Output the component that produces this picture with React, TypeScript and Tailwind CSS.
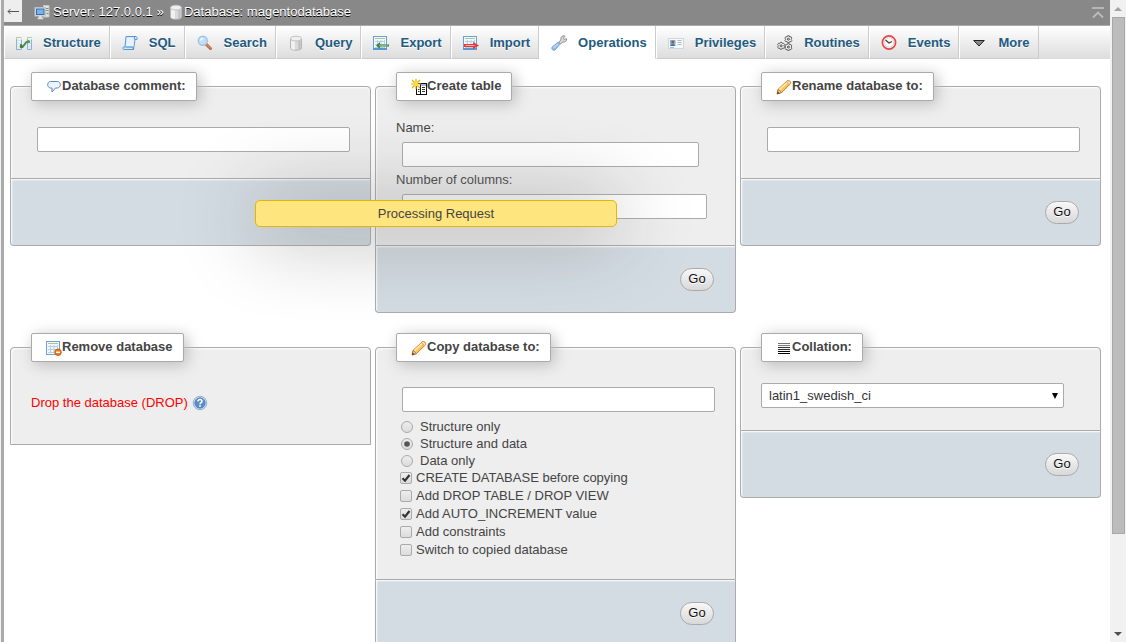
import React from "react";

type IconProps = { children: React.ReactNode };

function Icon({ children }: IconProps) {
  return (
    <svg width="16" height="16" viewBox="0 0 16 16" className="block shrink-0" aria-hidden="true">
      {children}
    </svg>
  );
}

const StructureIcon = () => (
  <Icon>
    <path d="M0 2.500h5.500M11 2.500h5" stroke="#b4cf9a" />
    <path d="M1 5.500h4M1 8.500h4M1 11.500h4M11.500 5.500h4M11.500 8.500h4M11.500 11.500h4" stroke="#d3e5f4" />
    <path d="M.5 3.500v11M5.500 4.500v10M.5 14.500h5M11.500 3.500v11M15.500 4.500v10M11.500 14.500h4" fill="none" stroke="#86b4dc" />
    <path d="M5 9v3h1.500L10.500 7H14" fill="none" stroke="#4f8a4b" strokeWidth="2" />
    <circle cx="5.500" cy="11.500" r="1.600" fill="#3f7f3e" />
    <circle cx="12.500" cy="6.500" r="1.500" fill="#5f9a52" />
  </Icon>
);

const SqlIcon = () => (
  <Icon>
    <path d="M4 1.500h9.500c1.500 0 2 1.500 1.500 3h-2L11.500 14.500H2c-1.200 0-1.500-1.500-.5-2.500h1.500z" fill="#d2e7fb" stroke="#5b97d3" />
    <path d="M5 2.500h7.500L11.200 12H3.800z" fill="#e6f2fd" />
    <path d="M12.500 4.500c-.3-1.500 0-3 1-3M3.500 12h7c.8 0 1 2 .3 2.500" fill="none" stroke="#3f7fc4" />
  </Icon>
);

const SearchIcon = () => (
  <Icon>
    <path d="M9 9.200l4.500 4.300" stroke="#b76a3c" strokeWidth="3" strokeLinecap="round" />
    <path d="M10 9.800l3.500 3.200" stroke="#e3a172" strokeLinecap="round" />
    <circle cx="5.800" cy="5.800" r="4.500" fill="#c3def8" stroke="#a2c4ea" strokeWidth="1.400" />
    <path d="M3.500 5.500c.3-1.300 1.200-2 2.500-2" stroke="#fff" fill="none" strokeWidth="1.300" />
  </Icon>
);

const DatabaseIcon = () => (
  <Icon>
    <path d="M2.500 3.500v9.500c0 3 11 3 11 0V3.500" fill="#d9d9d9" stroke="#b5b5b5" />
    <path d="M3 4v9c0 1 1.500 1.600 4 1.800V6z" fill="#f1f1f1" />
    <path d="M11.500 6v8.300" stroke="#bdbdbd" strokeWidth="2" />
    <ellipse cx="8" cy="3.600" rx="5.500" ry="2.400" fill="#efefef" stroke="#c2c2c2" />
  </Icon>
);

const SheetBase = () => (
  <>
    <rect x=".5" y="1.500" width="13" height="13" fill="#f2f8fd" stroke="#6f9fd0" />
    <path d="M2 3.500h10" stroke="#a8c890" />
    <path d="M2 6.500h10M2 9.500h10M2 12.500h10M4.500 5v8M8 5v8M11.500 5v8" stroke="#b7d0e8" />
  </>
);

const ExportIcon = () => (
  <Icon>
    <SheetBase />
    <path d="M0 14h14" stroke="#5b97d3" strokeWidth="2" />
    <path d="M3 10.500L7 7v2.500h9v2H7V14z" fill="#3d8540" />
    <path d="M6 10.500h8.500" stroke="#7db779" />
  </Icon>
);

const ImportIcon = () => (
  <Icon>
    <SheetBase />
    <path d="M0 14h14" stroke="#5b97d3" strokeWidth="2" />
    <path d="M1 9h9V7l6 3.500-6 3.500v-2H1z" fill="#e23a3a" />
    <path d="M2.500 10.500h9" stroke="#f8b0b0" />
  </Icon>
);

const WrenchIcon = () => (
  <Icon>
    <path d="M10 2.500c1-1.800 3-2 4.200-1.300L12.500 3l.8 1.500 2.200-.8c.4 2.300-1.500 4-3.700 3.400L9.500 9 7.800 7l2-2z" fill="#d5d5d5" stroke="#8c8c8c" strokeWidth=".9" />
    <path d="M7 7.200L1.200 12c-1.300 2 .8 4 2.800 3l5-5.800z" fill="#8fbcec" stroke="#6f9fd6" strokeWidth=".9" />
    <path d="M7 9l-4.500 4" stroke="#c3dcf7" strokeWidth="1.200" />
  </Icon>
);

const PrivilegesIcon = () => (
  <Icon>
    <rect x=".5" y="3.500" width="15" height="10" fill="#f6f9fc" stroke="#cfd6dd" />
    <rect x="2" y="5" width="5.500" height="6" fill="#7fb0e6" />
    <circle cx="4.800" cy="7" r="1.500" fill="#a5562d" />
    <path d="M2.500 11c.5-2.500 4-2.500 4.500 0z" fill="#3a6ca8" />
    <path d="M9.500 5.500h4M9.500 7.500h4M9.500 9.500h4M2 12.500h4" stroke="#a9bace" />
  </Icon>
);

const RoutinesIcon = () => (
  <Icon>
    <g fill="#f5f5f5" stroke="#555" strokeWidth=".9" strokeLinejoin="round">
      <path d="M10.500.8h1.800l.4 1.200 1.300-.3.900 1.500-.9 1 .9 1.100-.9 1.500-1.300-.4-.4 1.200h-1.800l-.4-1.200-1.300.4-.9-1.500.9-1.100-.9-1 .9-1.500 1.300.3z" />
      <path d="M3.200 7.400H5l.4 1.200 1.300-.3.900 1.500-.9 1 .9 1.100-.9 1.500-1.300-.4L5 14.200H3.200L2.800 13l-1.300.4-.9-1.500.9-1.100-.9-1 .9-1.500 1.300.3z" />
      <path d="M10.500 8.600h1.800l.4 1.200 1.300-.3.900 1.500-.9 1 .9 1.100-.9 1.500-1.300-.4-.4 1.200h-1.800l-.4-1.200-1.300.4-.9-1.500.9-1.100-.9-1 .9-1.500 1.300.3z" />
    </g>
    <g fill="none" stroke="#444">
      <circle cx="11.400" cy="4.200" r="1" />
      <circle cx="4.100" cy="10.800" r="1" />
      <circle cx="11.400" cy="12" r="1" />
    </g>
  </Icon>
);

const EventsIcon = () => (
  <Icon>
    <circle cx="8" cy="7.500" r="6.600" fill="#fafafa" stroke="#e4474a" strokeWidth="1.700" />
    <circle cx="8" cy="7.500" r="4.700" fill="none" stroke="#a9b5b5" strokeDasharray="1 1.200" />
    <path d="M4.500 5l3.500 3 3-1.500" fill="none" stroke="#444" strokeWidth="1.300" />
  </Icon>
);

const MoreIcon = () => (
  <Icon>
    <path d="M2.700 5.500h10.600L8 11z" fill="#8a8a8a" stroke="#222" />
  </Icon>
);

const ServerIcon = () => (
  <Icon>
    <path d="M9.500 1.500h5.500v11.500h-5.500z" fill="#e4e4e4" stroke="#c4c4c4" />
    <path d="M11.500 4.500h3M11.500 6.500h3" stroke="#888" />
    <path d="M12.500 9.500h2" stroke="#5dba4f" strokeWidth="1.500" />
    <rect x="1" y="3.500" width="10.500" height="8.500" fill="#dfe5ea" stroke="#b9c3cc" />
    <rect x="2.500" y="5" width="7.500" height="5.500" fill="#7fb0e8" stroke="#3a6da8" />
    <path d="M5 12.500h2.500v1.500H9v.8H4v-.8h1z" fill="#ddd" stroke="#ddd" />
  </Icon>
);

const CommentIcon = () => (
  <Icon>
    <path d="M4.500 2.500h7c3.500 0 4 6 0 6.500H9.500L6 13V9H4.500c-4-.5-3.500-6.500 0-6.500z" fill="#eef5fc" stroke="#5688c4" strokeLinejoin="round" />
  </Icon>
);

const CreateTableIcon = () => (
  <Icon>
    <rect x="5.500" y="4.500" width="10" height="11" fill="#fff" stroke="#111" />
    <path d="M10 5h5v2h-5z" fill="#9fb4e8" />
    <path d="M9.500 5v10" stroke="#111" />
    <path d="M11 8.500h3M11 10.500h3M11 12.500h3M7 10.500h1.500M7 12.500h1.500" stroke="#333" />
    <path d="M5 0v10M0 5h10M1 1l8 8M9 1L1 9" stroke="#e3ab00" strokeWidth="1.200" />
    <circle cx="5" cy="5" r="2.300" fill="#ffdd2e" />
  </Icon>
);

const PencilIcon = () => (
  <Icon>
    <path d="M1 15l1.200-4.700L11 2c1.800-1.500 4.500 1 3.200 3L5.500 13.600z" fill="#fbc65a" stroke="#c67a22" />
    <path d="M3.500 10.500L11.500 3" stroke="#fff0b8" strokeWidth="1.500" />
    <path d="M10.300 2.800L13.500 5.800 14.500 5c1-1.800-1.500-4.300-3.500-3z" fill="#f6ddb9" stroke="#c98e50" strokeWidth=".7" />
    <path d="M2.300 10.500l3 3L1.500 14.800z" fill="#f3dcc0" stroke="#9c5a21" strokeWidth=".7" />
    <path d="M1 15l.7-2.500 1.800 1.700z" fill="#5c2f10" />
  </Icon>
);

const RemoveIcon = () => (
  <Icon>
    <SheetBase />
    <circle cx="12" cy="12.300" r="3.300" fill="#ee7d1d" stroke="#b85209" strokeWidth=".8" />
    <path d="M10 12.300h4" stroke="#fff" strokeWidth="1.400" />
  </Icon>
);

const CollationIcon = () => (
  <Icon>
    <path d="M2 3.500h12M2 5.500h12" stroke="#777" />
    <path d="M2 7.500h12M2 9.500h12" stroke="#333" />
    <path d="M2 11.500h12M2 13.500h12" stroke="#000" />
  </Icon>
);

const HelpIcon = () => (
  <Icon>
    <circle cx="8" cy="8" r="6.800" fill="#c9dcf0" stroke="#7fa3cc" strokeWidth=".8" />
    <circle cx="8" cy="8" r="5.200" fill="#5c8dc8" stroke="#4777b0" strokeWidth=".6" />
    <path d="M6 6.500c0-2.600 4-2.600 4-.3 0 1.400-2 1.300-2 3" fill="none" stroke="#fff" strokeWidth="1.500" />
    <circle cx="8" cy="11" r=".9" fill="#fff" />
  </Icon>
);

const tabs = [
  { label: "Structure", icon: <StructureIcon /> },
  { label: "SQL", icon: <SqlIcon /> },
  { label: "Search", icon: <SearchIcon /> },
  { label: "Query", icon: <DatabaseIcon /> },
  { label: "Export", icon: <ExportIcon /> },
  { label: "Import", icon: <ImportIcon /> },
  { label: "Operations", icon: <WrenchIcon />, active: true },
  { label: "Privileges", icon: <PrivilegesIcon /> },
  { label: "Routines", icon: <RoutinesIcon /> },
  { label: "Events", icon: <EventsIcon /> },
  { label: "More", icon: <MoreIcon /> },
];

const textBox =
  "block h-[25px] rounded-[2px] border border-[#aaa] bg-white px-1.5 text-[#444] outline-none";

function Header() {
  return (
    <header className="flex h-[25px] items-center bg-[#888] text-white [text-shadow:0_1px_0_#000]">
      <button
        type="button"
        aria-label="Toggle navigation panel"
        className="flex h-[22px] w-[18px] items-center justify-center self-start bg-[#eee]"
      >
        <svg width="14" height="8" viewBox="0 0 14 8" aria-hidden="true">
          <path d="M2 4.500h11M4.500 2L2 4.500 4.500 7" fill="none" stroke="#555" />
        </svg>
      </button>
      <nav aria-label="Breadcrumb" className="ml-3 flex items-center pb-0.5">
        <ServerIcon />
        <a href="#server" className="ml-[3px]">
          Server: 127.0.0.1
        </a>
        <span className="mx-1">»</span>
        <DatabaseIcon />
        <a href="#database">Database: magentodatabase</a>
      </nav>
      <button type="button" aria-label="Scroll to top" className="mr-1.5 ml-auto">
        <svg width="12" height="12" viewBox="0 0 12 12" className="block" aria-hidden="true">
          <path d="M0 1h12" stroke="#bbb" strokeWidth="1.800" />
          <path d="M1 10.500l5-5 5 5" fill="none" stroke="#bbb" strokeWidth="1.800" />
        </svg>
      </button>
    </header>
  );
}

function TabBar() {
  return (
    <nav aria-label="Database" className="border-t border-[#aaa] bg-linear-to-b from-white to-[#dcdcdc]">
      <ul className="flex h-[33px]">
        {tabs.map((tab) => (
          <li key={tab.label} className="flex">
            <a
              href={"#" + tab.label.toLowerCase()}
              aria-current={tab.active ? "page" : undefined}
              className={
                tab.active
                  ? "flex items-center gap-[11px] border-x border-b border-l-white border-r-[#ccc] border-b-white bg-white pt-px pr-2 pl-[11px] font-bold text-[#235a81]"
                  : "flex items-center gap-[11px] border-x border-b border-l-white border-r-[#ccc] border-b-[#ccc] pt-px pr-2 pl-[11px] font-bold text-[#235a81] [text-shadow:0_1px_0_#fff]"
              }
            >
              {tab.icon}
              {tab.label}
            </a>
          </li>
        ))}
      </ul>
    </nav>
  );
}

type PanelProps = {
  title: string;
  icon: React.ReactNode;
  footer?: "empty" | "go";
  bodyClass?: string;
  children: React.ReactNode;
};

function Panel({ title, icon, footer, bodyClass = "pb-[22px]", children }: PanelProps) {
  return (
    <form className="min-w-0" onSubmit={(e) => e.preventDefault()}>
      <fieldset className="min-w-0 rounded-t-[4px] border border-[#aaa] bg-[#eee] px-5 shadow-[inset_1px_1px_2px_#fff]">
        <legend className="flex h-[29px] items-center rounded-[2px] border border-[#aaa] bg-white pr-2.5 pl-3.5 font-bold shadow-[3px_3px_15px_#bbb]">
          {icon}
          <span className="pb-px">{title}</span>
        </legend>
        <div className={"pt-[18px] " + bodyClass}>{children}</div>
      </fieldset>
      {footer && (
        <div className="flex h-[67px] items-center justify-end rounded-b-[4px] border-x border-b border-[#aaa] bg-[#d3dce3] pr-[21px] shadow-[inset_1px_1px_2px_#fff]">
          {footer === "go" && (
            <button
              type="submit"
              className="h-[23px] w-[34px] rounded-[12px] border border-[#aaa] bg-linear-to-b from-[#f8f8f8] to-[#d8d8d8] leading-[20px] text-[#111] [text-shadow:0_1px_0_#fff]"
            >
              Go
            </button>
          )}
        </div>
      )}
    </form>
  );
}

function RadioRow({ label, checked = false }: { label: string; checked?: boolean }) {
  return (
    <label className="ml-[5px] flex h-[17px] items-center gap-[7px]">
      <span className="grid size-3">
        <input
          type="radio"
          name="what"
          defaultChecked={checked}
          className="peer col-start-1 row-start-1 size-3 appearance-none rounded-full border border-[#aaa] bg-linear-to-b from-[#eee] to-[#dcdcdc]"
        />
        <svg
          viewBox="0 0 12 12"
          className="pointer-events-none invisible col-start-1 row-start-1 size-3 peer-checked:visible"
          aria-hidden="true"
        >
          <circle cx="6" cy="6" r="2.800" fill="#555" />
        </svg>
      </span>
      {label}
    </label>
  );
}

function CheckRow({ label, checked = false }: { label: string; checked?: boolean }) {
  return (
    <label className="ml-1 flex h-[18px] items-center gap-1">
      <span className="grid size-3">
        <input
          type="checkbox"
          defaultChecked={checked}
          className="peer col-start-1 row-start-1 size-3 appearance-none rounded-[2px] border border-[#aaa] bg-linear-to-b from-[#eee] to-[#dcdcdc]"
        />
        <svg
          viewBox="0 0 12 12"
          className="pointer-events-none invisible col-start-1 row-start-1 size-3 peer-checked:visible"
          aria-hidden="true"
        >
          <path d="M2.500 6.200l2.500 2.500L9.500 3" fill="none" stroke="#333" strokeWidth="2.200" />
        </svg>
      </span>
      {label}
    </label>
  );
}

function Scrollbar() {
  return (
    <div aria-hidden="true" className="flex w-4 shrink-0 flex-col bg-[#f1f1f1]">
      <div className="flex h-[17px] items-center justify-center">
        <svg width="8" height="4" viewBox="0 0 8 4">
          <path d="M4 0l4 4H0z" fill="#a3a3a3" />
        </svg>
      </div>
      <div className="flex grow flex-col">
        <div className="mr-px ml-0.5 h-[85%] border border-[#a8a8a8] bg-[#bcbcbc]" />
      </div>
      <div className="flex h-[17px] items-center justify-center">
        <svg width="8" height="4" viewBox="0 0 8 4">
          <path d="M0 0h8L4 4z" fill="#505050" />
        </svg>
      </div>
    </div>
  );
}

export default function App() {
  return (
    <div className="relative flex h-screen overflow-hidden bg-white font-['Liberation_Sans',Arial,sans-serif] text-[13px] leading-[18px] text-[#444]">
      <div className="w-1 shrink-0 border-l border-[#f3f3f3] bg-[#aaa]" />
      <div className="min-w-0 grow overflow-hidden">
        <Header />
        <TabBar />
        <main className="grid grid-cols-3 items-start gap-x-1 gap-y-5 pt-[13px] pr-[9px] pl-1.5">
          <Panel title="Database comment:" icon={<CommentIcon />} footer="empty">
            <div className="mt-2 mb-1 flex pl-1.5">
              <input type="text" aria-label="Database comment" className={textBox + " w-full"} />
            </div>
          </Panel>

          <Panel title="Create table" icon={<CreateTableIcon />} footer="go">
            <label htmlFor="table-name" className="block">
              Name:
            </label>
            <div className="mt-[5px] mb-1 flex pr-4 pl-1.5">
              <input id="table-name" type="text" className={textBox + " w-full"} />
            </div>
            <label htmlFor="column-count" className="block">
              Number of columns:
            </label>
            <div className="mt-[5px] mb-1 flex pr-2 pl-1.5">
              <input id="column-count" type="text" className={textBox + " w-full"} />
            </div>
          </Panel>

          <Panel title="Rename database to:" icon={<PencilIcon />} footer="go">
            <div className="mt-2 mb-1 flex pl-1.5">
              <input type="text" aria-label="Rename database to" className={textBox + " w-full"} />
            </div>
          </Panel>

          <Panel title="Remove database" icon={<RemoveIcon />} bodyClass="pb-8">
            <div className="flex items-center gap-1 pt-3.5">
              <a href="#drop" className="text-[#f00]">
                Drop the database (DROP)
              </a>
              <a href="#help" aria-label="Documentation">
                <HelpIcon />
              </a>
            </div>
          </Panel>

          <Panel title="Copy database to:" icon={<PencilIcon />} footer="go" bodyClass="pb-5">
            <div className="mt-[7px] mb-1.5 flex pl-1.5">
              <input type="text" aria-label="Copy database to" className={textBox + " w-full"} />
            </div>
            <RadioRow label="Structure only" />
            <RadioRow label="Structure and data" checked />
            <RadioRow label="Data only" />
            <CheckRow label="CREATE DATABASE before copying" checked />
            <CheckRow label="Add DROP TABLE / DROP VIEW" />
            <CheckRow label="Add AUTO_INCREMENT value" checked />
            <CheckRow label="Add constraints" />
            <CheckRow label="Switch to copied database" />
          </Panel>

          <Panel title="Collation:" icon={<CollationIcon />} footer="go">
            <div className="mt-[3px] mr-4 grid items-center">
              <select
                aria-label="Collation"
                className="col-start-1 row-start-1 h-[25px] w-full appearance-none rounded-[2px] border border-[#aaa] bg-white pl-[7px] text-[#333]"
              >
                <option>latin1_swedish_ci</option>
              </select>
              <svg
                width="6"
                height="6"
                viewBox="0 0 6 6"
                className="pointer-events-none col-start-1 row-start-1 mr-1.5 justify-self-end"
                aria-hidden="true"
              >
                <path d="M0 0h6L3 6z" fill="#000" />
              </svg>
            </div>
          </Panel>
        </main>
      </div>
      <Scrollbar />
      <div
        role="status"
        className="absolute top-[200px] left-[255px] w-[362px] rounded-[5px] border border-[#e2b709] bg-[#ffe57e] py-1 text-center leading-[17px] shadow-[0_5px_80px_#888]"
      >
        Processing Request
      </div>
    </div>
  );
}
